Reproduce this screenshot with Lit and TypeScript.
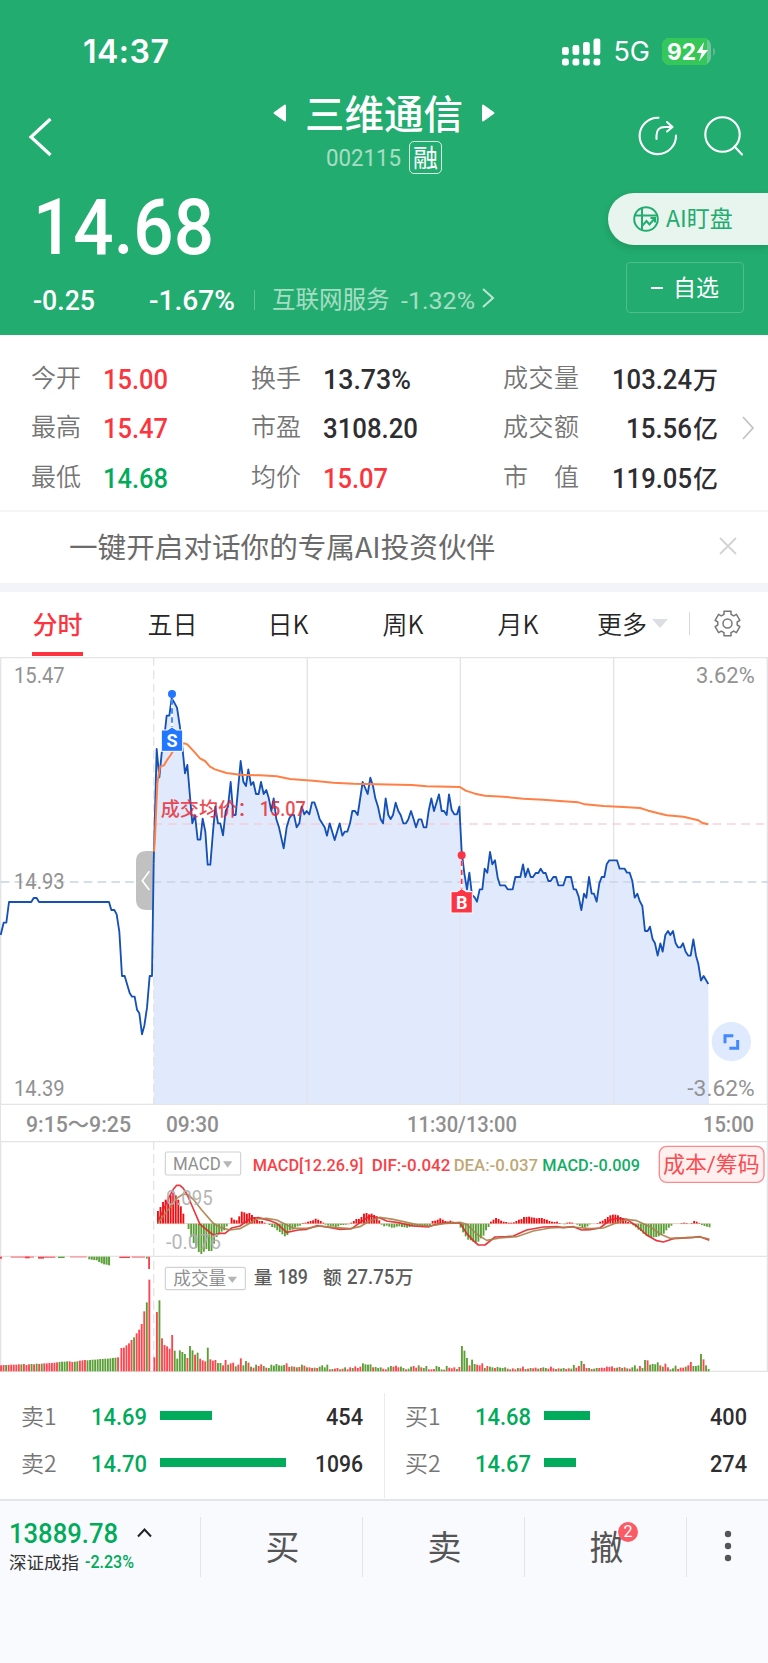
import { LitElement, html, svg, css } from "lit";
import { customElement, property } from "lit/decorators.js";

/* Condensed figure: Roboto squeezed to a given width, like a DIN face. */
@customElement("din-text")
class DinText extends LitElement {
  @property() text = "";
  @property({ type: Number }) size = 28;
  @property({ type: Number }) width = 60;
  @property({ type: Number }) weight = 500;
  static styles = css`
    :host { display: inline-flex; flex: none; }
    svg { display: block; overflow: visible; }
    text { font-family: Roboto, "Noto Sans CJK SC", sans-serif; fill: currentColor; }
  `;
  render() {
    return html`<svg width=${this.width} height=${this.size}>
      <text x="0" y=${this.size * 0.86} font-size=${this.size} font-weight=${this.weight}
        textLength=${this.width} lengthAdjust="spacingAndGlyphs">${this.text}</text>
    </svg>`;
  }
}

const din = (text: string, width: number, size: number, cls = "", weight = 500) =>
  html`<din-text class=${cls} .text=${text} .width=${width} .size=${size} .weight=${weight}></din-text>`;

const SHIFT = 1140;
const right = (s: string) =>
  s.trim().split(/\s+/).map((p) => {
    const [x, y] = p.split(",").map(Number);
    return `${x + SHIFT},${y}`;
  }).join(" ");

const PRE = "2,855 11,818 19,818 27,756 94,756 101,744 110,744 117,756 327,756 334,780 343,780 350,793 358,845 366,978 374,978 389,1029 396,1040 404,1040 411,1079 418,1090 426,1153 433,1127 441,1073 449,978 456,978 461,640";
const PRICE = "461,640 470,297 478,382 485,310 492,270 500,197 508,197 515,145 524,160 531,173 539,225 547,290 555,370 562,345 570,440 577,520 585,495 593,569 601,569 608,506 616,545 623,644 631,644 639,545 646,470 654,520 661,520 669,556 677,483 684,470 692,396 700,495 707,495 715,408 722,333 730,395 738,408 745,358 753,405 760,396 768,432 776,432 783,396 791,432 799,420 806,443 814,483 821,445 829,508 837,532 851,595 860,532 868,505 875,495 882,495 890,532 898,520 905,470 913,493 920,483 928,493 936,457 943,457 951,480 959,508 974,532 981,557 989,520 1004,570 1019,520 1027,557 1034,545 1042,545 1050,520 1057,483 1065,483 1073,495 1088,396 1103,432 1111,383 1119,408 1126,445 1134,470 1142,508 "
  + right("9,520 17,445 25,495 32,507 39,495 47,458 55,483 62,495 70,520 78,520 85,508 93,483 101,508 108,532 116,508 124,508 131,532 139,532 146,483 154,445 162,483 177,433 185,483 192,483 200,495 207,433 215,480 223,493 231,493 238,470 245,605 253,670 261,718 268,668 276,735 284,742 291,755 299,718 307,718 314,656 322,668 330,606 337,643 345,631 353,683 360,706 375,706 383,718 398,718 406,681 421,681 429,643 436,681 444,656 452,681 459,681 467,669 475,669 482,656 490,669 497,669 505,693 512,693 520,681 528,681 535,706 550,706 558,681 573,681 581,718 588,718 596,740 604,780 612,731 619,743 627,681 635,731 642,731 650,755 658,700 665,681 673,681 680,643 688,631 711,631 719,656 734,656 741,668 749,668 757,693 764,743 772,731 780,755 787,768 795,843 803,843 810,830 818,868 825,880 833,917 841,880 848,905 856,855 864,843 871,855 879,843 887,880 894,892 902,892 909,880 917,905 925,917 932,917 940,868 948,917 955,942 963,992 971,978 985,1002");
const AVG = "462,605 465,560 472,400 480,350 492,346 500,332 512,315 530,285 553,280 562,283 585,308 600,325 615,333 630,350 645,358 680,369 720,374 780,376 830,379 870,387 940,392 1000,398 1060,401 1200,404 "
  + right("95,405 140,409 240,411 257,422 285,431 315,437 370,440 430,446 490,449 550,454 595,457 615,463 670,468 730,471 780,474 805,482 835,490 860,496 910,500 955,511 968,519 985,523");
const DIF = "474,275 490,240 505,205 520,178 530,166 540,166 550,175 562,195 575,225 600,283 615,295 640,315 660,310 675,310 695,294 720,288 750,266 775,263 810,272 830,280 860,307 895,300 920,298 950,287 980,291 1020,298 1055,296 1085,274 1110,258 "
  + right("0,264 20,273 55,278 100,288 145,291 160,285 200,278 240,279 260,310 280,332 295,345 315,345 345,321 380,320 400,318 440,300 490,291 530,290 550,293 580,290 605,300 630,299 660,294 690,270 715,265 740,268 770,288 800,315 830,332 850,336 880,326 940,322 960,320 988,331");
const DEA = "474,278 500,245 530,205 550,192 565,195 580,208 605,240 640,280 660,292 690,300 720,296 745,282 770,267 800,265 830,270 850,280 880,295 920,295 960,288 1000,292 1050,296 1080,290 1110,272 1140,262 1180,268 1250,284 1290,288 1330,281 1380,277 1400,283 1430,312 1460,331 1500,324 1550,320 1600,303 1650,294 1720,291 1770,296 1810,294 1850,278 1880,268 1910,272 1950,290 1980,312 2010,325 2060,323 2100,321 2128,327";

/* Each run: x of the first bar, then the histogram values. */
const HIST: [number, number[]][] = [
  [474, [38, 50, 65, 72, 78, 85, 93, 85, 72, 52, 30]],
  [566, [-16, -40, -58, -72, -85, -91, -84, -76, -82, -82, -60, -40, -30, -24, -20, -8]],
  [695, [18, 12, 10, 22, 36, 34, 30, 32, 26, 20, 12, 8, 8, 3]],
  [809, [-4, -10, -12, -20, -25, -32, -38, -34, -20, -18, -12, -8, -6]],
  [909, [2, 3, 6, 8, 10, 15, 12, 8, 3]],
  [977, [-3, -6, -8, -8, -11, -8, -4, -4, -3, -2]],
  [1054, [3, 8, 14, 14, 20, 30, 32, 28, 30, 26, 22, 10]],
  [1145, [-3, -8, -6, -9, -12, -12, -9, -8, -10, -11, -12, -10, -8, -8, -7, -7, -8, -7, -8, -6]],
  [1298, [8, 9, 12, 16, 12, 8, 6, 9, 6, 3, 2]],
  [1382, [-12, -26, -38, -48, -50, -54, -56, -54, -44, -36, -20, -10]],
  [1473, [6, 12, 17, 14, 9, 6, 5, 3, 3, 4, 8, 12, 14, 20, 20, 21, 19, 18, 16, 17, 17, 14, 12, 8, 6, 5, 6, 2]],
  [1694, [-2, 3, 4, 3]],
  [1732, [-3, -7, -12, -11, -8, -2]],
  [1793, [2, 6, 9, 14, 20, 25, 27, 27, 25, 20, 16, 10, 5, 2]],
  [1900, [-5, -11, -18, -22, -30, -35, -38, -40, -41, -40, -38, -34, -30, -20, -12, -6]],
  [2045, [2, 3, 2]],
  [2075, [2, 8, 6, 2]],
  [2106, [-4, -7, -9, -11]],
];

/* Volume bars: colour letter + height. */
const VOL: [number, string][] = [
  [3, "r18 r19 g19 r19 r20 r20 r20 r21 g21 r22 r19 r21 g22 r21 g23 r22 g23 r24 r24 r25 r25 r26 r27 g28 g29 g29 g30 r30 r28 g29 g30 r32 r33 r34 g33 g34 g35 g35 g36 g37 g37 g38 g38 g39 g40 g41 r42"],
  [364, "r70 r71 r78 r84 r94 g102 r114 r125 r142 r180 g207 r275"],
  [463, "r42 r178 g213 r99 r79 r75 r68 r109 g62 g38 g63 g58 g52 r40 g76 g63 r50 g56 r38 r33 r30 g71 r36 r32 r34 g25 g25 r18 r34 g20 r24 r26 g15 r20 r39 g18 g31 r26 g14 r11 g20 r16 r21 g16 r11 g10 g20 g17 g22 g18 g17 g19 r24 r13 g15 r14 g12 r13 g20 r17 g12 r12 r10 g11 r10 g14 g18 g12 g20 r6 g7 r8 r10 g6 r8 g12 r6 r12 g10 r15 r10 r14 g24 g21 g20 g21 r12 g13 g10 g12 r8 r6 g12 g16 r14 r17"],
  [1195, "r12 g14 g10 r6 g8 g14 r16 r11 g18 r12 g10 g16 r6 r6 r7 g16 g13 g6 r5 g16 r11 r9 r12 g7"],
  [1378, "r13 g76 g62 g40 r18 g35 g22 r20 r18 r24 g10 r16 g14 g12 r10 g13 g11 g10 g12 r8 g6 r9 r6 g10 r9 r14 g7 r8 g10 r9 r11 g8 r10 g12 g10 r8 r14 r9 g7 r9 g8 g10 r7 r9 g8 g19 r11 r16 g31 r22 r10 g10 r7 g8 g10 r10 r11 r10 r14 r13 r15 r10 g11 r13 g10 r12 g9 r8 g12 g18 g8 r16 g10 g34 r33 g20 g22 g21 g27 r18 g14 r23 r12 g6 g9 g17 r7 r11 r11 g14 r18 r28 g16 g16 g18 g52 r36 g18 g7"],
];

@customElement("app-root")
class AppRoot extends LitElement {
  static styles = css`
    :host { display: block; width: 768px; height: 1663px; background: #fff; color: #333;
      font-family: Roboto, "Noto Sans CJK SC", sans-serif; overflow: hidden; }
    * { box-sizing: border-box; }
    svg { display: block; flex: none; }
    .cjk { font-family: "Noto Sans CJK SC", sans-serif; white-space: nowrap; line-height: 1; }
    .head { background: #22ac6f; color: #fff; height: 335px; display: flex; flex-direction: column; }
    .status { height: 88px; padding: 15px 52px 0 83px; display: flex; align-items: center; justify-content: space-between;
      font-family: Inter, sans-serif; }
    .clock { font-size: 32px; font-weight: 600; letter-spacing: 0.5px; }
    .sys { display: flex; align-items: center; }
    .net { font-size: 27px; margin: 0 12px 0 12px; }
    .nav { height: 92px; display: grid; grid-template-columns: 256px 1fr 256px; }
    .back { padding: 29px 0 0 28px; }
    .center { display: flex; flex-direction: column; align-items: center; }
    .title { display: flex; align-items: center; gap: 18px; height: 50px; }
    .name { font-size: 39.5px; font-weight: 500; padding-bottom: 3px; }
    .code { display: flex; gap: 8px; align-items: center; height: 38px; }
    .dim { opacity: .6; }
    .tag { width: 33px; height: 33px; border: 1.5px solid #d9f0e5; border-radius: 5px; font-size: 25px;
      display: flex; align-items: center; justify-content: center; padding-bottom: 2px; }
    .acts { display: flex; justify-content: flex-end; gap: 25px; padding: 28px 25px 0 0; }
    .quote { flex: 1; display: flex; justify-content: space-between; }
    .last { padding: 7px 0 0 33px; display: flex; flex-direction: column; }
    .row { display: flex; align-items: center; }
    .chg { height: 32px; margin-top: 19px; }
    .gap1 { margin-left: 54px; }
    .vr { width: 1px; height: 20px; background: #5fc497; margin: 0 17px 0 19px; }
    .sector { font-size: 23.5px; margin-right: 11px; opacity: .6; padding-bottom: 2px; }
    .chev { margin-left: 7px; opacity: .7; margin-top: -4px; }
    .side { display: flex; flex-direction: column; align-items: flex-end; padding-top: 13px; }
    .pill { width: 160px; height: 52px; border-radius: 26px 0 0 26px; background: #e8f4ee; color: #22ac6f; font-size: 23px;
      display: flex; align-items: center; gap: 7px; padding-left: 25px; box-shadow: 0 3px 7px rgba(0,60,30,.18); }
    .up { padding-bottom: 3px; }
    .fav { width: 118px; height: 51px; margin: 17px 24px 0 0; border: 1px solid #4dbd8b; border-radius: 4px;
      display: flex; align-items: center; justify-content: center; gap: 10px; font-size: 23px; }
    .dash { width: 12px; height: 2px; background: #fff; }

    .stats { height: 175px; padding: 19px 14px 9px 31px; display: grid; grid-template-columns: 220px 252px 215px 1fr; align-items: center; }
    .col { display: flex; flex-direction: column; }
    .item { height: 49.500px; display: flex; align-items: center; }
    .lab { color: #757575; font-size: 25px; font-weight: 350; margin-right: 22px; padding-bottom: 5px; }
    .wide { display: flex; width: 76px; justify-content: space-between; }
    .push { margin-left: auto; }
    .red { color: #fc3440; } .grn { color: #00ab5b; } .blk { color: #2e2e30; }
    .unit { font-size: 25px; font-weight: 500; color: #2e2e30; padding-bottom: 1px; margin-left: 1px; }
    .banner { height: 73px; border-top: 2px solid #f4f5f7; display: flex; align-items: center; justify-content: space-between;
      padding: 0 31px 3px 69px; font-size: 28.6px; color: #6b6b6b; font-weight: 400; }
    .band { height: 9px; background: #f2f4f9; }
    .tabs { height: 65px; display: grid; grid-template-columns: 115px 115px 116px 114px 116px 113px 79px; color: #262626; font-size: 25px; font-weight: 350; padding-bottom: 0; }
    .tab { display: flex; align-items: center; justify-content: center; position: relative; padding-bottom: 2px; }
    .on { color: #fc3440; font-weight: 500; }
    .on::after { content: ""; position: absolute; left: 32px; bottom: 1px; width: 51px; height: 4px; background: #fc3440; }
    .more { gap: 5px; padding-left: 21px; justify-content: flex-start; }
    .set { padding-left: 0; }
    .sep { width: 1px; height: 23px; background: #d5d7da; margin-right: 26px; }
    .gear { margin-left: -7px; }

    .panel text { font-family: Roboto, "Noto Sans CJK SC", sans-serif; }
    .axis { height: 36px; border: 1px solid #e2e2e2; border-top: 0; border-bottom: 0; display: grid;
      grid-template-columns: 381px 1fr 1fr; align-items: center; padding: 2px 13px 0 25px; color: #8f8f8f; }
    .times { display: flex; gap: 35px; }
    .end { justify-self: end; }

    .book { height: 127px; display: grid; grid-template-columns: 384px 384px; padding-top: 21px; }
    .sideb { display: flex; flex-direction: column; }
    .sideb + .sideb { border-left: 1px solid #ececee; height: 105px; }
    .sideb + .sideb .lv { padding-left: 20px; }
    .lv { height: 47px; display: flex; align-items: center; padding: 0 21px; }
    .lvl { width: 69.500px; font-size: 23px; color: #777; font-weight: 350; padding-bottom: 3px; }
    .bar { height: 9px; background: #00ab5b; margin-left: 13px; margin-top: -2px; }

    .foot { height: 165px; background: #f9fafd; border-top: 2px solid #e3e5e9; padding-top: 16px; display: grid; align-items: start;
      grid-template-columns: 200px 162px 162px 162px 1fr; }
    .idx { height: 60px; padding: 2px 0 0 9px; display: flex; flex-direction: column; gap: 6px; }
    .l1 { display: flex; align-items: center; gap: 19px; }
    .l2 { display: flex; align-items: center; gap: 6px; font-size: 17.5px; }
    .btn { height: 60px; border-left: 1px solid #e3e5e8; display: flex; align-items: center; justify-content: center;
      font-size: 34px; color: #555; position: relative; padding: 0 0 2px 2px; }
    .dots { padding-right: 2px; }
    .badge { position: absolute; left: 93px; top: 5px; width: 20px; height: 20px; border-radius: 50%; background: #fc5a64; color: #fff;
      font: 400 16px/20px Roboto, sans-serif; text-align: center; }
  `;

  label(t: string, x: number, y: number, w: number, size: number, fill: string, weight = 400, opacity = 1) {
    return svg`<text x=${x} y=${y} font-size=${size} fill=${fill} font-weight=${weight} opacity=${opacity}
      textLength=${w} lengthAdjust="spacingAndGlyphs">${t}</text>`;
  }

  stat(k: string, v: string, w: number, cls: string) {
    return html`<div class="item"><span class="lab cjk">${k}</span>${din(v, w, 28, cls)}</div>`;
  }
  total(k: string, v: string, w: number, u: string) {
    return html`<div class="item">
      <span class="lab cjk wide">${k.split("").map((c) => html`<span>${c}</span>`)}</span>
      ${din(v, w, 28, "blk push")}<span class="unit cjk">${u}</span></div>`;
  }

  header() {
    return html`<div class="head">
      <div class="status">
        <span class="clock">14:37</span>
        <div class="sys">
          <svg width="39" height="28" fill="#fff">
            ${[[0, 9, 8], [10.5, 7, 10], [21, 4, 13], [31.5, 0.5, 16.5]].map(([x, y, h]) => svg`
              <rect x=${x} y=${y} width="6.800" height=${h} rx="2.3"/><rect x=${x} y="20.5" width="6.800" height="7" rx="2.3"/>`)}
          </svg>
          <span class="net">5G</span>
          <svg width="54" height="27" viewBox="0 0 54 27">
            <rect x="0" y="0" width="49" height="27" rx="8" fill="#6ec79c"/>
            <path d="M8 0H45V27H8A8 8 0 0 1 0 19V8A8 8 0 0 1 8 0Z" fill="#35c759"/>
            <path d="M51 9.5c3 1.2 3 7 0 8.2Z" fill="#5bb98b"/>
            <text x="5" y="22" font-size="23.5" font-weight="700" fill="#fff" font-family="Inter, sans-serif" textLength="29" lengthAdjust="spacingAndGlyphs">92</text>
            <path d="M42 4L34.5 15h5L37 23.5L46 12h-5.500Z" fill="#fff"/>
          </svg>
        </div>
      </div>
      <div class="nav">
        <div class="back"><svg width="24" height="40" fill="none" stroke="#fff" stroke-width="3.2"><path d="M22.500 2L3 20L22.500 38"/></svg></div>
        <div class="center">
          <div class="title">
            <svg width="14" height="18"><path d="M1.500 9L12 1.500V16.500Z" fill="#fff" stroke="#fff" stroke-width="2" stroke-linejoin="round"/></svg>
            <span class="name cjk">三维通信</span>
            <svg width="14" height="18"><path d="M12.500 9L2 1.500V16.500Z" fill="#fff" stroke="#fff" stroke-width="2" stroke-linejoin="round"/></svg>
          </div>
          <div class="code">${din("002115", 75, 24.5, "dim", 400)}<span class="tag cjk">融</span></div>
        </div>
        <div class="acts">
          <svg width="40" height="40" fill="none" stroke="#fff" stroke-width="2.100" stroke-linecap="round" stroke-linejoin="round">
            <path d="M20.500 1.700A18.200 18.200 0 1 0 38 19.500"/><path d="M18.500 23V19.500Q18.500 11 27 11H34M29 6L34.500 11L29 15.500"/>
          </svg>
          <svg width="40" height="40" fill="none" stroke="#fff" stroke-width="2.100" stroke-linecap="round"><circle cx="19.500" cy="18.500" r="17.200"/><path d="M31.500 30.500L39 38.500"/></svg>
        </div>
      </div>
      <div class="quote">
        <div class="last">
          ${din("14.68", 181, 78)}
          <div class="row chg">
            ${din("-0.25", 62, 28)}${din("-1.67%", 86, 28, "gap1")}
            <span class="vr"></span><span class="sector cjk">互联网服务</span>
            ${din("-1.32%", 74, 24, "dim", 400)}
            <svg class="chev" width="13" height="22" fill="none" stroke="#fff" stroke-width="2"><path d="M1 2L11 11L1 20"/></svg>
          </div>
        </div>
        <div class="side">
          <div class="pill">
            <svg width="26" height="26" fill="none" stroke="#22ac6f" stroke-width="2"><circle cx="13" cy="13" r="11.800"/>
              <path d="M9 2V24M1.500 9.500H25M9 20L13.500 15L16.500 18.500L22 12M17.500 12H22V16.500"/></svg>
            <span class="cjk up">AI盯盘</span>
          </div>
          <div class="fav"><span class="dash"></span><span class="cjk up">自选</span></div>
        </div>
      </div>
    </div>`;
  }

  priceChart() {
    return html`<svg class="panel" width="768" height="448" viewBox="0 21 2304 1344">
      <polygon points=${`461,1363 ${PRICE} 2127,1363`} fill="#e0eafc"/>
      <g stroke="#e4e4e6" stroke-width="4" fill="none">
        <path d="M0 23H2304M0 1363H2304M2 21V1365M2302 21V1365M922 21V1363M1381 21V1363M1841 21V1363"/>
        <path d="M461 21V1365" stroke-dasharray="26 14"/>
      </g>
      <path d="M461 522H2304" stroke="#f7c9d0" stroke-opacity=".85" stroke-width="4" stroke-dasharray="26 17"/>
      <path d="M2 696H2304" stroke="#c8d5e2" stroke-width="4" stroke-dasharray="26 15.500"/>
      ${this.label("15.47", 42, 99, 152, 66, "#929292")}
      ${this.label("14.93", 42, 718, 152, 66, "#929292")}
      ${this.label("14.39", 42, 1338, 152, 66, "#929292")}
      ${this.label("3.62%", 2088, 99, 176, 66, "#929292")}
      <path d="M461 603V780H440Q408 780 408 748V635Q408 603 440 603Z" fill="#c1c1c1"/>
      <path d="M448 664L427 692L448 720" fill="none" stroke="#fff" stroke-width="5"/>
      <polyline points=${PRE} fill="none" stroke="#1450b8" stroke-width="5.500" stroke-linejoin="round"/>
      <polyline points=${PRICE} fill="none" stroke="#1450b8" stroke-width="5.500" stroke-linejoin="round"/>
      <polyline points=${AVG} fill="none" stroke="#ff7f45" stroke-width="6" stroke-linejoin="round"/>
      <text x="482" y="499" font-size="57.500" font-weight="500" fill="#e8262f" opacity=".82">成交均价：</text>
      ${this.label("15.07", 779, 499, 138, 61, "#e8262f", 500, 0.82)}
      ${this.marker(516, 132, 240, "S", "#2177ff")}
      ${this.marker(1385, 616, 725, "B", "#fb3545")}
      <circle cx="2194" cy="1175" r="59" fill="#dfeaff"/>
      <path d="M2175 1180V1157H2200M2213 1170V1195H2188" fill="none" stroke="#4288ff" stroke-width="9"/>
      ${this.label("-3.62%", 2062, 1338, 202, 66, "#929292")}
    </svg>`;
  }

  marker(x: number, dot: number, top: number, t: string, c: string) {
    return svg`<path d=${`M${x} ${dot + 16}V${top - 8}`} stroke="#fff" stroke-width="5"/>
      <path d=${`M${x} ${dot + 16}V${top - 8}`} stroke=${c} stroke-width="5" stroke-dasharray="16 11"/>
      <circle cx=${x} cy=${dot} r="12" fill=${c}/>
      <path d=${`M${x - 32} ${top}H${x - 14}L${x} ${top - 9}L${x + 14} ${top}H${x + 32}V${top + 64}H${x - 32}Z`} fill=${c} stroke="#fff" stroke-width="3"/>
      <text x=${x} y=${top + 51} font-size="54" font-weight="700" fill="#fff" text-anchor="middle">${t}</text>`;
  }

  indicators() {
    const G = "#5b9f37";
    return html`<svg class="panel" width="768" height="231" viewBox="0 33 2304 693">
      <g stroke="#e4e4e6" stroke-width="4" fill="none">
        <path d="M0 35H2304M0 379H2304M0 724H2304M2 33V726M2302 33V726"/><path d="M461 33V726" stroke-dasharray="26 14"/>
      </g>
      ${HIST.map(([x0, vs]) => vs.map((v, i) => svg`<rect x=${x0 - 3 + i * 7.63} y=${v > 0 ? 281 - v : 281} width="5.600" height=${Math.abs(v)} fill=${v > 0 ? "#f00c12" : G}/>`))}
      <path d="M471 281H2131" stroke="#c9a58d" stroke-width="1.500"/>
      <polyline points=${DIF} fill="none" stroke="#e6222b" stroke-opacity=".9" stroke-width="5" stroke-linejoin="round"/>
      <polyline points=${DEA} fill="none" stroke="#a8834b" stroke-opacity=".9" stroke-width="5" stroke-linejoin="round"/>
      ${this.label("0.095", 498, 226, 140, 62, "#b0b0b0", 400, 0.92)}
      ${this.label("-0.076", 498, 356, 165, 62, "#b0b0b0", 400, 0.92)}
      <g fill="#fb3f48">
        <rect x="0" y="380" width="6" height="6"/><rect x="32" y="380" width="70" height="2.500"/><rect x="75" y="380" width="14" height="5"/>
        <rect x="114" y="380" width="18" height="6"/><rect x="132" y="380" width="34" height="3"/><rect x="210" y="380" width="50" height="2"/>
        <rect x="358" y="380" width="32" height="4"/><rect x="395" y="380" width="40" height="2.500"/><rect x="444.500" y="380" width="5.500" height="37"/>
      </g>
      <g fill=${G}>
        <rect x="174" y="380" width="20" height="4"/><rect x="438" y="380" width="5" height="6"/>
        ${[8, 9, 10, 11, 16, 20, 23, 24, 26].map((h, i) => svg`<rect x=${265 + i * 7.4} y="380" width="6" height=${h}/>`)}
      </g>
      ${VOL.map(([x0, s]) => s.split(" ").map((b, i) => svg`<rect x=${x0 - 2.7 + i * 7.63} y=${724 - +b.slice(1)} width="5.600" height=${b.slice(1)} fill=${b[0] === "r" ? "#fd4750" : G}/>`))}
      <rect x="496" y="66" width="226" height="69" rx="5" fill="#fff" stroke="#d2d2d2" stroke-width="3.500"/>
      ${this.label("MACD", 519, 120, 143, 53, "#8f8f8f")}
      <path d="M669 94H697L683 113Z" fill="#b5b5b5"/>
      ${this.label("MACD[12.26.9]", 758, 123, 332, 51, "#fb3f48", 500)}
      ${this.label("DIF:-0.042", 1115, 123, 236, 51, "#fb3f48", 500)}
      ${this.label("DEA:-0.037", 1361, 123, 253, 51, "#c0a876", 500)}
      ${this.label("MACD:-0.009", 1627, 123, 293, 51, "#12ad65", 500)}
      <rect x="1978" y="49" width="314" height="108" rx="22" fill="#fff0ef" stroke="#fb8a90" stroke-width="4"/>
      ${this.label("成本/筹码", 1989, 127, 290, 64, "#fb4b50")}
      <rect x="496" y="412" width="240" height="67" rx="5" fill="#fff" stroke="#d2d2d2" stroke-width="3.500"/>
      ${this.label("成交量", 520, 465, 158, 53, "#8f8f8f")}
      <path d="M683 440H711L697 459Z" fill="#b5b5b5"/>
      ${this.label("量", 761, 462, 56, 56, "#5c5c5c", 500)}
      ${this.label("189", 833, 461, 91, 58, "#5c5c5c", 500)}
      ${this.label("额", 969, 462, 56, 56, "#5c5c5c", 500)}
      ${this.label("27.75", 1041, 461, 142, 58, "#5c5c5c", 500)}
      ${this.label("万", 1184, 462, 56, 56, "#5c5c5c", 500)}
    </svg>`;
  }

  level(k: string, p: string, w: number, amt: string, aw: number) {
    return html`<div class="lv"><span class="lvl cjk">${k}</span>${din(p, 56, 24.5, "grn")}
      <span class="bar" style="width:${w}px"></span>${din(amt, aw, 24.5, "blk push")}</div>`;
  }

  render() {
    const gear = Array.from({ length: 6 }, (_, i) => {
      const p = (r: number, d: number) => {
        const a = ((i * 60 + d - 90) * Math.PI) / 180;
        return `${(13.5 + r * Math.cos(a)).toFixed(1)} ${(13.5 + r * Math.sin(a)).toFixed(1)}`;
      };
      return `${i ? "L" : "M"}${p(9.8, -21)}L${p(12.8, -16)}L${p(12.8, 16)}L${p(9.8, 21)}`;
    }).join("") + "Z";
    return html`
      ${this.header()}
      <div class="stats">
        <div class="col">${this.stat("今开", "15.00", 65, "red")}${this.stat("最高", "15.47", 65, "red")}${this.stat("最低", "14.68", 65, "grn")}</div>
        <div class="col">${this.stat("换手", "13.73%", 88, "blk")}${this.stat("市盈", "3108.20", 95, "blk")}${this.stat("均价", "15.07", 65, "red")}</div>
        <div class="col">${this.total("成交量", "103.24", 80, "万")}${this.total("成交额", "15.56", 66, "亿")}${this.total("市值", "119.05", 80, "亿")}</div>
        <svg class="push" width="12" height="24" fill="none" stroke="#c4c4c4" stroke-width="1.800"><path d="M1 1L11 12L1 23"/></svg>
      </div>
      <div class="banner"><span class="cjk">一键开启对话你的专属AI投资伙伴</span>
        <svg width="18" height="18" stroke="#d3d3d3" stroke-width="1.800"><path d="M1 1L17 17M17 1L1 17"/></svg></div>
      <div class="band"></div>
      <div class="tabs">
        <span class="tab on cjk">分时</span><span class="tab cjk">五日</span><span class="tab cjk">日K</span>
        <span class="tab cjk">周K</span><span class="tab cjk">月K</span>
        <span class="tab more cjk">更多<svg width="16" height="9"><path d="M0 0H16L8 9Z" fill="#dcdee3"/></svg></span>
        <span class="tab more set"><i class="sep"></i>
          <svg class="gear" width="27" height="27" fill="none" stroke="#777" stroke-width="1.500" stroke-linejoin="round"><path d=${gear}/><circle cx="13.500" cy="13.500" r="4.500"/></svg></span>
      </div>
      ${this.priceChart()}
      <div class="axis">
        <div class="times">${din("9:15～9:25", 105, 22)}${din("09:30", 53, 22)}</div>
        ${din("11:30/13:00", 110, 22)}${din("15:00", 51, 22, "end")}
      </div>
      ${this.indicators()}
      <div class="book">
        <div class="sideb">${this.level("卖1", "14.69", 52, "454", 37)}${this.level("卖2", "14.70", 126, "1096", 48)}</div>
        <div class="sideb">${this.level("买1", "14.68", 46, "400", 37)}${this.level("买2", "14.67", 32, "274", 37)}</div>
      </div>
      <div class="foot">
        <div class="idx">
          <div class="l1">${din("13889.78", 109, 27.5, "grn")}<svg width="15" height="10" fill="none" stroke="#222" stroke-width="2"><path d="M1 8.500L7.500 1.500L14 8.500"/></svg></div>
          <div class="l2"><span class="cjk">深证成指</span>${din("-2.23%", 49, 17.5, "grn")}</div>
        </div>
        <div class="btn cjk">买</div><div class="btn cjk">卖</div>
        <div class="btn cjk">撤<span class="badge">2</span></div>
        <div class="btn dots"><svg width="8" height="32" fill="#555"><circle cx="4" cy="4" r="3.200"/><circle cx="4" cy="16" r="3.200"/><circle cx="4" cy="28" r="3.200"/></svg></div>
      </div>`;
  }
}
